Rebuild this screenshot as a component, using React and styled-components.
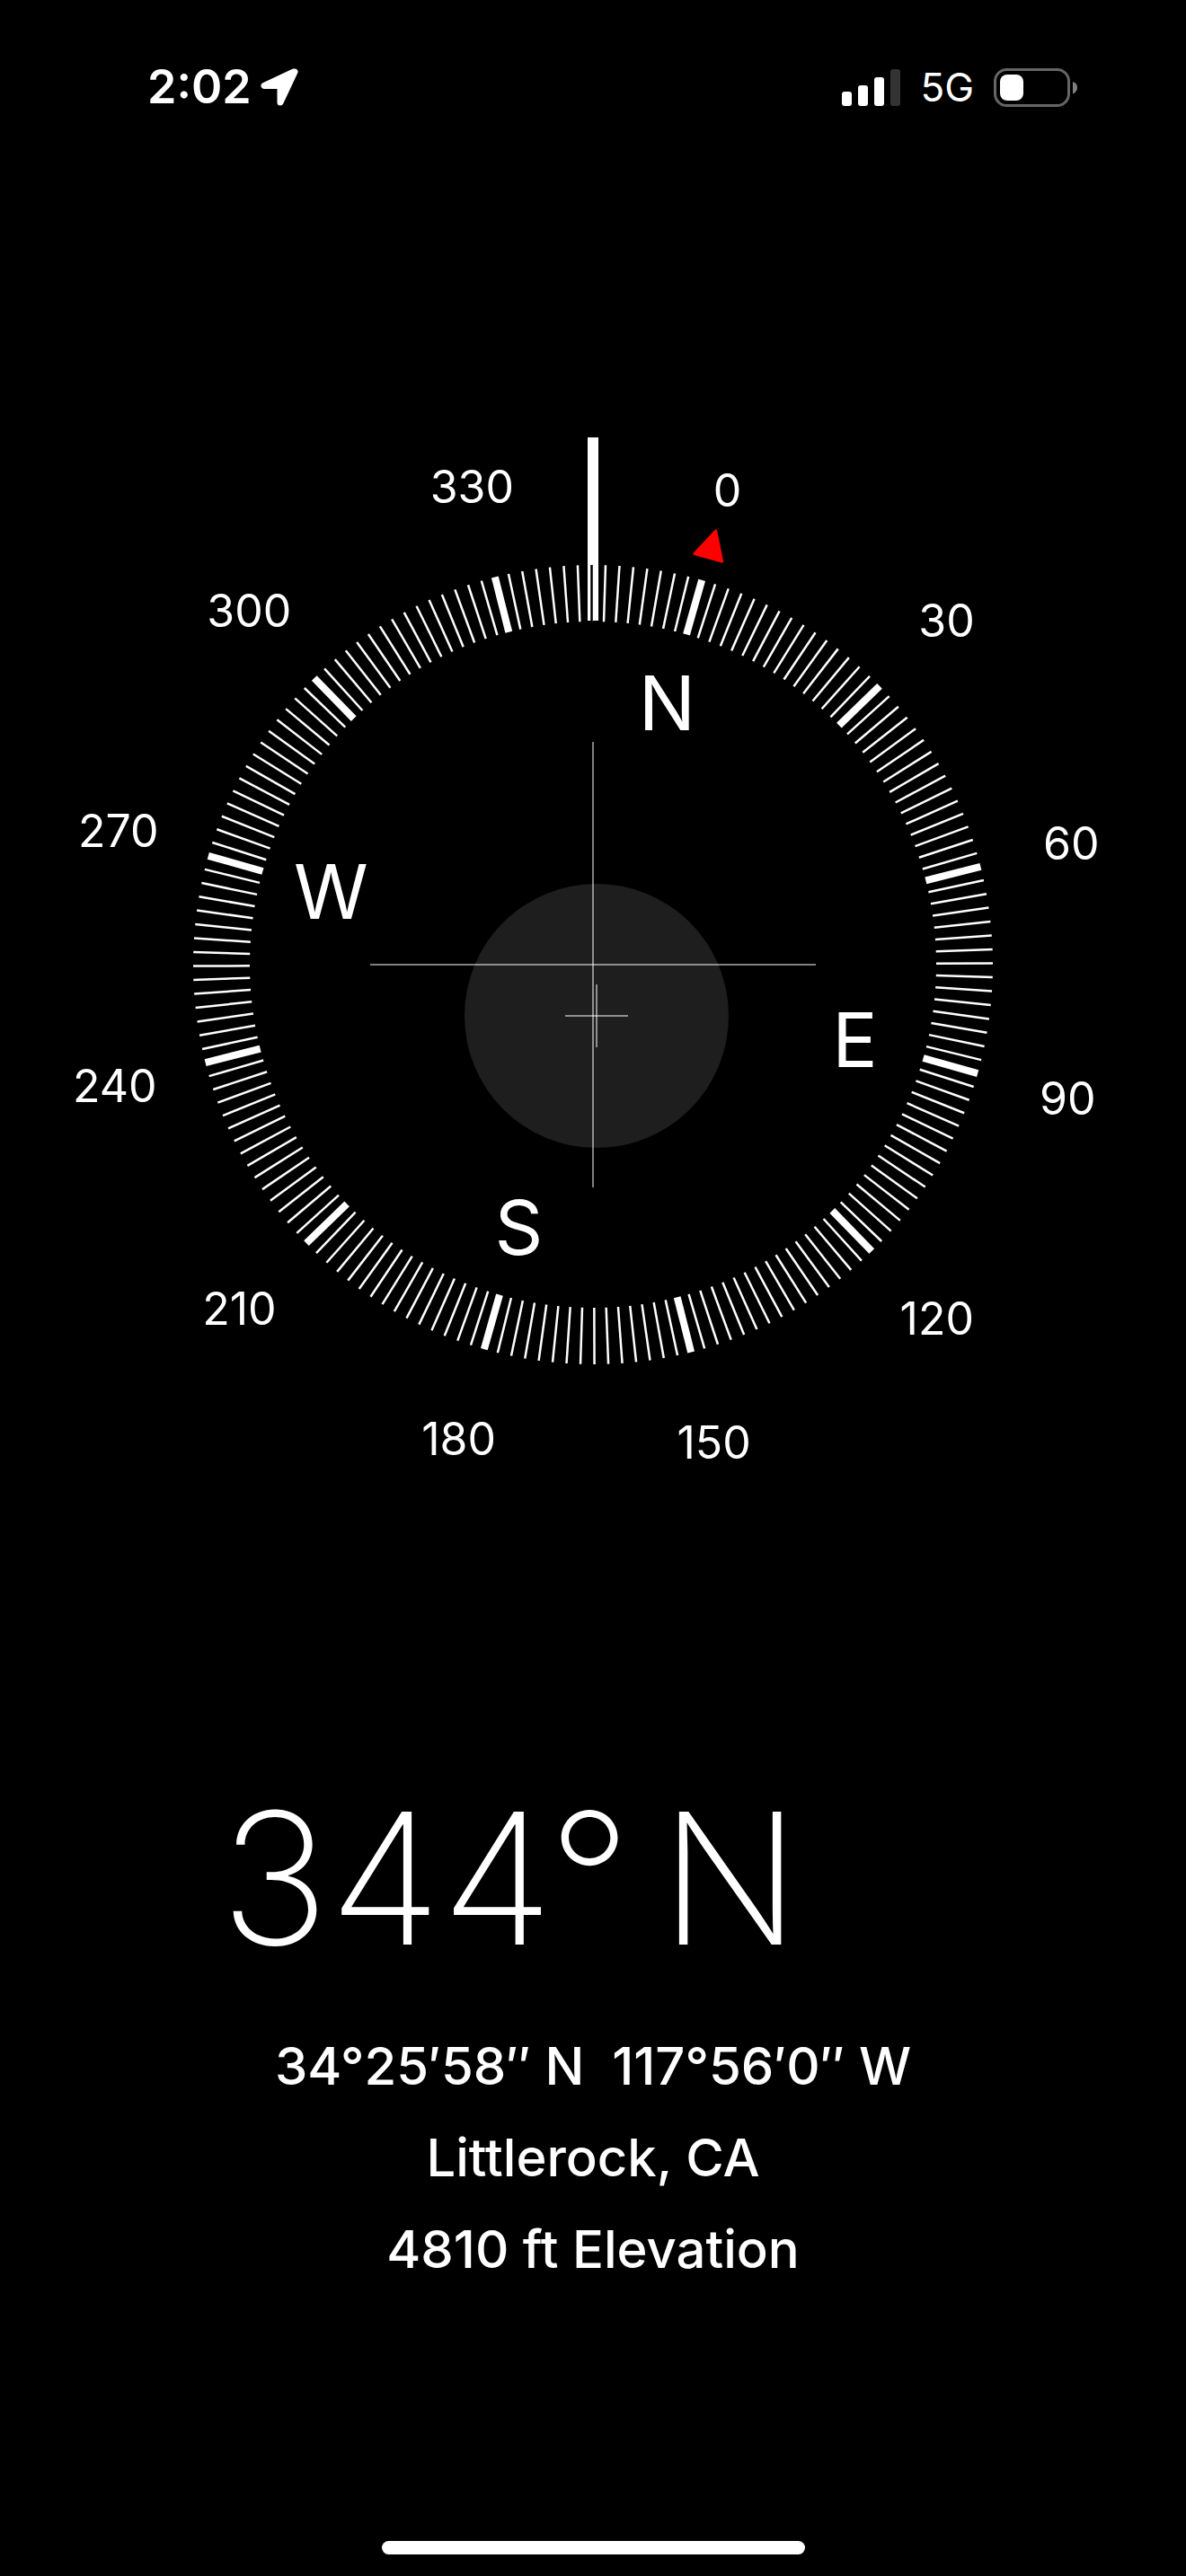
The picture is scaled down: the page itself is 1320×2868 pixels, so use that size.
import React from 'react'
import styled, { createGlobalStyle } from 'styled-components'

const GlobalStyle = createGlobalStyle`
    body {
        margin: 0;
        background: black;
        color: white;
        font-family: Inter, "Liberation Sans", sans-serif;
    }
`
const Screen = styled.div`
    display: flex;
    flex-direction: column;
    min-height: 100vh;
`
const StatusBar = styled.header`
    display: flex;
    justify-content: space-between;
    align-items: center;
    height: 150px;
    padding: 44px 120px 0 164px;
    box-sizing: border-box;
    line-height: 60px;
`
const StatusGroup = styled.div`
    display: flex;
    align-items: center;
    gap: ${props => props.$gap}px;
`
const Time = styled.time`
    font-size: 52px;
    font-weight: 600;
`
const Network = styled.span`
    font-size: 44px;
    font-weight: 400;
`
const Icon = styled.svg`
    display: block;
    flex: none;
`
const Main = styled.main`
    display: flex;
    flex-direction: column;
    align-items: center;
    padding-top: 264px;
`
const Dial = styled.svg`
    display: block;
    width: 100%;
`
const Degree = styled.text`
    fill: white;
    font-size: 50px;
    text-anchor: middle;
`
const Cardinal = styled(Degree)`
    font-size: 84px;
`
const Heading = styled.h1`
    display: grid;
    grid-template-columns: 6fr 5fr;
    column-gap: 32px;
    width: 100%;
    margin: 237px 0 38px;
    font-size: 204px;
    font-weight: 250;
    line-height: 240px;
`
const Bearing = styled.span`
    text-align: right;
`
const Details = styled.div`
    display: flex;
    flex-direction: column;
    align-items: center;
    font-size: 58px;
    font-weight: 500;
    line-height: 102px;
    white-space: pre;

    > p {
        margin: 0;
    }
`
const HomeIndicator = styled.div`
    align-self: center;
    width: 471px;
    height: 15px;
    margin: auto 0 24px;
    border-radius: 8px;
    background: white;
`

const ROTATION = 15.8
const OUTER = 445
const INNER = 382

const ticks = Array.from({ length: 180 }, (_, i) => i * 2)
const degrees = Array.from({ length: 12 }, (_, i) => i * 30)
const cardinals = ['N', 'E', 'S', 'W']

// labels stay upright while the ring turns
const place = (angle, radius, drop) => {
    const rad = (angle + ROTATION) * Math.PI / 180
    return { x: Math.sin(rad) * radius, y: -Math.cos(rad) * radius + drop }
}

const Compass = () => (
    <Dial viewBox="-660 -660 1320 1320" role="img" aria-label="Compass">
        <circle cx="4" cy="57" r="147" fill="#1e1e1e" />
        <g stroke="white" strokeOpacity="0.5" strokeWidth="2">
            <path d="M-248 0H248" />
            <path d="M0 -248V248" />
            <path d="M-31 57H39" />
            <path d="M4 22V92" />
        </g>
        <g transform={`rotate(${ROTATION})`} stroke="white">
            {ticks.map(angle => (
                <line
                    key={angle}
                    y1={-OUTER}
                    y2={-INNER}
                    strokeWidth={angle % 30 === 0 ? 8 : 2.5}
                    transform={`rotate(${angle})`}
                />
            ))}
            <path d="M0 -502L-16 -471H16Z" fill="red" stroke="red" strokeWidth="3" strokeLinejoin="round" />
        </g>
        {/* the tick under the heading bar shows through in black */}
        <rect x="-6" y="-587" width="12" height="204" fill="white" />
        <line x1="-1.500" y1={-OUTER} x2="-1.500" y2={-INNER} stroke="black" strokeWidth="2.5" />
        {degrees.map(angle => (
            <Degree key={angle} {...place(angle, 549, 18)}>{angle}</Degree>
        ))}
        {cardinals.map((name, i) => (
            <Cardinal key={name} {...place(i * 90, 303, 31)}>{name}</Cardinal>
        ))}
    </Dial>
)

const LocationArrow = () => (
    <Icon width="42" height="42" viewBox="0 0 42 42">
        <path d="M37 4L4 19.500H22V38L38 4Z" fill="white" stroke="white" strokeWidth="7" strokeLinejoin="round" />
    </Icon>
)

const Signal = () => (
    <Icon width="65" height="41" viewBox="0 0 65 41" fill="white">
        <rect x="0" y="25" width="11" height="16" rx="3" />
        <rect x="18" y="18" width="11" height="23" rx="3" />
        <rect x="36" y="9" width="11" height="32" rx="3" />
        <rect x="54" y="0" width="11" height="41" rx="3" fill="#333" />
    </Icon>
)

const Battery = () => (
    <Icon width="94" height="43" viewBox="0 0 94 43">
        <rect x="1.500" y="1.500" width="82" height="40" rx="13" fill="none" stroke="#666" strokeWidth="3" />
        <rect x="7" y="7" width="26" height="29" rx="8" fill="white" />
        <path d="M88 15C91.500 16 93 18.500 93 21.500S91.500 27 88 28.500Z" fill="#808080" />
    </Icon>
)

const App = () => {

    return(
        <Screen>
            <GlobalStyle />
            <StatusBar>
                <StatusGroup $gap={10}>
                    <Time>2:02</Time>
                    <LocationArrow />
                </StatusGroup>
                <StatusGroup $gap={22}>
                    <Signal />
                    <Network>5G</Network>
                    <Battery />
                </StatusGroup>
            </StatusBar>
            <Main>
                <Compass />
                <Heading>
                    <Bearing>344°</Bearing>
                    <span>N</span>
                </Heading>
                <Details>
                    <p>34°25′58″ N  117°56′0″ W</p>
                    <p>Littlerock, CA</p>
                    <p>4810 ft Elevation</p>
                </Details>
            </Main>
            <HomeIndicator />
        </Screen>
    )
}

export default App;
